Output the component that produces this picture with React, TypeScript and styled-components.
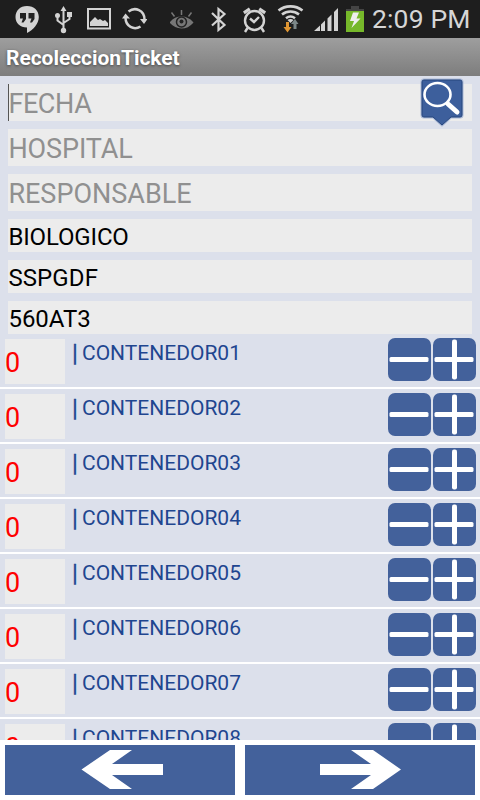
import React from "react";
import styled, { createGlobalStyle } from "styled-components";

const GlobalStyle = createGlobalStyle`
  * { box-sizing: border-box; }
  body { margin: 0; background: #fff; font-family: Roboto, "Noto Sans", sans-serif; }
`;

const Screen = styled.main`
  display: flex;
  flex-direction: column;
  width: 480px;
  height: 800px;
  overflow: hidden;
  background: #fff;
`;

const StatusBar = styled.header`
  display: flex;
  flex: none;
  height: 38px;
  background: #1e1e1e;
  color: #d6d6d6;
`;

const StatusIcon = styled.svg<{ $gap: number }>`
  flex: none;
  height: 38px;
  margin-left: ${(p) => p.$gap}px;
`;

const Clock = styled.time`
  margin-left: 8px;
  font-size: 26.5px;
  line-height: 37px;
  letter-spacing: 0.15px;
  white-space: nowrap;
`;

const TitleBar = styled.h1`
  flex: none;
  height: 38px;
  margin: 0;
  padding-left: 6px;
  background: linear-gradient(#9e9e9e, #7d7d7d);
  color: #fff;
  font-size: 21px;
  font-weight: 700;
  line-height: 40px;
  letter-spacing: -0.05px;
  text-shadow: 0 1px 3px rgba(0, 0, 0, 0.5);
`;

const Form = styled.section`
  display: flex;
  flex: none;
  flex-direction: column;
  gap: 8px;
  padding: 8px 8px 0;
  background: #dce0eb;
`;

const Field = styled.div<{ $filled?: boolean; $spacing?: number }>`
  position: relative;
  height: ${(p) => (p.$filled ? 33 : 37)}px;
  padding-left: 0.4px;
  background: #ececec;
  color: ${(p) => (p.$filled ? "#000" : "#909090")};
  font-size: ${(p) => (p.$filled ? 24 : 27)}px;
  line-height: ${(p) => (p.$filled ? 37 : 41)}px;
  letter-spacing: ${(p) => p.$spacing ?? 0}px;
  white-space: nowrap;
`;

const Caret = styled.span`
  position: absolute;
  left: 0;
  top: 0;
  width: 1px;
  height: 37px;
  background: #555;
`;

const SearchPin = styled.svg`
  position: absolute;
  z-index: 1;
  right: 4px;
  top: -7px;
`;

const List = styled.section`
  flex: none;
  height: 406px;
  overflow: hidden;
  background: #dce0eb;
`;

const Row = styled.div`
  display: flex;
  align-items: flex-start;
  height: 55px;
  padding: 4px 4px 0 5px;
  border-bottom: 2px solid #fff;
`;

const Count = styled.div`
  width: 60px;
  height: 45px;
  margin-top: 1px;
  background: #ececec;
  color: #f00;
  font-size: 27px;
  line-height: 48px;
`;

const Divider = styled.span`
  width: 10px;
  margin-left: 7px;
  color: #1f4690;
  font-size: 24px;
  line-height: 30px;
  -webkit-text-stroke: 0.3px #1f4690;
`;

const Name = styled.span`
  flex: 1;
  color: #1f4690;
  font-size: 21px;
  line-height: 30px;
  white-space: nowrap;
`;

const Steppers = styled.div`
  display: flex;
  gap: 2px;
`;

const StepButton = styled.button`
  width: 43px;
  height: 43px;
  padding: 0;
  border: 0;
  border-radius: 7px;
  background: #43619b;
  svg { display: block; }
`;

const Nav = styled.nav`
  display: flex;
  flex: none;
  gap: 10px;
  height: 60px;
  padding: 5px;
`;

const NavButton = styled.button`
  flex: 1;
  padding: 0;
  border: 0;
  background: #43619b;
  svg { display: block; }
`;

const light = "#d3d3d3";

const StatusIcons = () => (
  <>
    <StatusIcon $gap={15} width="24" viewBox="15 0 24 38">
      <path fill={light} d="M27 6c-7 0-11.500 4.800-11.500 11s4.500 10.500 11.500 10.500V33c6-3 11.800-9 11.800-16C38.800 10.500 34 6 27 6z" />
      <path fill="#222" d="M20 13h6v6l-2.500 3.500h-2l1.500-4h-3zM28.500 13h6v6L32 22.500h-2l1.500-4h-3z" />
    </StatusIcon>
    <StatusIcon $gap={16} width="18" viewBox="55 0 18 38" fill="none" stroke={light} strokeWidth="2">
      <path d="M63.500 9v21M57.500 17v3.500l6 4.500M69.500 15.500V19l-6 4" />
      <path fill={light} stroke="none" d="M63.500 6l3 5h-6zM67 12h5v5h-5z" />
      <circle cx="57.500" cy="15.500" r="2.500" fill={light} stroke="none" />
      <circle cx="63.500" cy="30.500" r="2.700" fill={light} stroke="none" />
    </StatusIcon>
    <StatusIcon $gap={14} width="24" viewBox="87 0 24 38">
      <path fill="none" stroke={light} strokeWidth="2" d="M88 9h22v19.500H88z" />
      <path fill={light} d="M90 26v-4l5-5 3 3 2-1 3 2 2-1 3 3v3z" />
    </StatusIcon>
    <StatusIcon $gap={11} width="25" viewBox="122 0 25 38" fill="none" stroke={light} strokeWidth="2.500">
      <path d="M128.500 11.500c6.500-5 16-1.500 16 8M125.500 17.500c0 9 8.500 13 15 9" />
      <path fill={light} stroke="none" d="M122 18.500l3.500-5 4.500 5zM140 19h7.500l-3.500 5z" />
    </StatusIcon>
    <StatusIcon $gap={23} width="24" viewBox="170 0 24 38" fill="none" stroke="#777" strokeWidth="1.500">
      <path fill="#777" d="M170.500 22.500c6-7 16-7 22 0-6 7-16 7-22 0z" />
      <circle cx="181.500" cy="22" r="5" stroke="#222" />
      <circle cx="181.500" cy="21.500" r="2" fill="#222" stroke="none" />
      <path d="M181.500 10v5M171.500 12.500l3 4M191.500 12.500l-3 4" />
    </StatusIcon>
    <StatusIcon $gap={17} width="16" viewBox="211 0 16 38" fill="none" stroke={light} strokeWidth="2.200">
      <path d="M212 13l12.500 12-6 5V9l6 5L212 25.500" />
    </StatusIcon>
    <StatusIcon $gap={16} width="24" viewBox="243 0 24 38" fill="none" stroke={light} strokeWidth="2.400">
      <circle cx="254.500" cy="20.500" r="9.500" />
      <path d="M250 18.500l4 3.500 5-5M247.500 28l-2.500 4M261.500 28l2.500 4" />
      <path strokeWidth="3.200" d="M243.800 12.800l6-4M265.200 12.800l-6-4" />
    </StatusIcon>
    <StatusIcon $gap={10} width="28" viewBox="277 0 28 38" fill="none" stroke={light} strokeWidth="2.600">
      <path d="M278.500 10.500c7-5.500 17-5.500 24 0M282 14.500c5-4 12-4 17 0M286 18.200c3-2.300 6-2.300 9 0" />
      <path fill={light} stroke="none" d="M287.500 20q3-2 6 0l-3 3z" />
      <path fill="#e09632" stroke="none" d="M286 22h3v5h2.500l-4 5.500-4-5.500h2.500z" />
      <path fill="#7c8788" stroke="none" d="M293.500 29v-5H291l4-5 3.500 5h-2v5z" />
    </StatusIcon>
    <StatusIcon $gap={9} width="24" viewBox="314 0 24 38">
      <path fill={light} d="M314 31l6-5.500V31zM321 24.500l4-4V31h-4zM327.500 18.500l4-4V31h-4zM334 12l4-4v23h-4z" />
    </StatusIcon>
    <StatusIcon $gap={8} width="18" viewBox="346 0 18 38">
      <path fill="#444" d="M351 6h8v3h5v3h-18V9h5z" />
      <path fill="#76b82a" d="M346 11h18v21h-18z" />
      <path fill="#eee" d="M353 12.500h6l-2.500 6h4L351.500 28l2.500-7h-4z" />
    </StatusIcon>
  </>
);

const PinIcon = () => (
  <SearchPin width="49" height="52" viewBox="0 0 49 52">
    <path fill="none" stroke="#a9b8d6" strokeWidth="2" d="M5 2.500h36q2.500 0 2.500 2.500v33q0 2.500-2.500 2.500h-9l-9 8-9-8H5q-2.500 0-2.500-2.500V5q0-2.500 2.500-2.500z" />
    <path fill="#3d5f9c" stroke="#27467d" strokeWidth="1" d="M5 3h36q2 0 2 2v33q0 2-2 2h-9l-9 8-9-8H5q-2 0-2-2V5q0-2 2-2z" />
    <ellipse cx="18.500" cy="17.500" rx="13" ry="11.500" fill="none" stroke="#fff" strokeWidth="2.600" />
    <path d="M29 27l9 8" stroke="#fff" strokeWidth="5" strokeLinecap="round" />
  </SearchPin>
);

const StepIcon = ({ plus = false }: { plus?: boolean }) => (
  <svg width="43" height="43" viewBox="0 0 43 43" fill="#fff">
    <rect x="1.500" y="19" width="39" height="5" rx="1.500" />
    {plus && <rect x="19" y="1.500" width="5" height="40" rx="2" />}
  </svg>
);

const rows = ["01", "02", "03", "04", "05", "06", "07", "08"];

export default function App() {
  return (
    <Screen>
      <GlobalStyle />
      <StatusBar>
        <StatusIcons />
        <Clock>2:09 PM</Clock>
      </StatusBar>
      <TitleBar>RecoleccionTicket</TitleBar>
      <Form>
        <Field $spacing={-0.4}>
          <Caret />
          FECHA
          <PinIcon />
        </Field>
        <Field $spacing={-0.1}>HOSPITAL</Field>
        <Field>RESPONSABLE</Field>
        <Field $filled $spacing={-0.15}>BIOLOGICO</Field>
        <Field $filled $spacing={0.1}>SSPGDF</Field>
        <Field $filled>560AT3</Field>
      </Form>
      <List>
        {rows.map((n) => (
          <Row key={n}>
            <Count>0</Count>
            <Divider>|</Divider>
            <Name>CONTENEDOR{n}</Name>
            <Steppers>
              <StepButton aria-label="Restar"><StepIcon /></StepButton>
              <StepButton aria-label="Sumar"><StepIcon plus /></StepButton>
            </Steppers>
          </Row>
        ))}
      </List>
      <Nav>
        <NavButton aria-label="Anterior">
          <svg width="230" height="50" viewBox="0 0 230 50">
            <path fill="#fff" d="M76.500 24.500L105 5h22l-20 14h51v11h-51l20 14h-22z" />
          </svg>
        </NavButton>
        <NavButton aria-label="Siguiente">
          <svg width="230" height="50" viewBox="0 0 230 50">
            <path fill="#fff" d="M156 24.500L128 5h-22l20 14H75v11h51l-20 14h22z" />
          </svg>
        </NavButton>
      </Nav>
    </Screen>
  );
}
